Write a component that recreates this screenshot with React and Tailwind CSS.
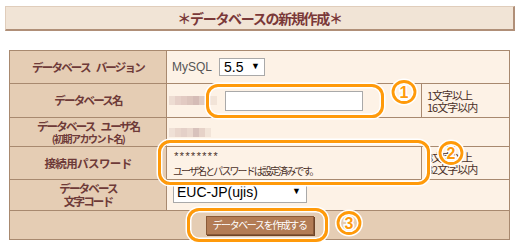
import React from "react";

const labelBase =
  "bg-[#e5cdb4] border border-[#a8896f] text-center font-bold text-[11.5px] text-[#6e3a38] leading-[13px]";
const label = labelBase + " tracking-[-1.8px]";
const value = "bg-[#fdf2e6] border border-[#a8896f] text-[11px] text-[#4a3028]";

function Blur({ cells }) {
  return (
    <div className="flex h-[9px]">
      {cells.map((c, i) => (
        <div key={i} className="h-full w-[6px]" style={{ background: c }} />
      ))}
    </div>
  );
}

function Gap() {
  return <span className="inline-block w-[6px]" />;
}

function Circled({ n, x, y }) {
  return (
    <svg
      className="absolute"
      style={{ left: x - 15, top: y - 15 }}
      width="30"
      height="30"
      viewBox="0 0 30 30"
    >
      <ellipse cx="15" cy="15" rx="11" ry="10.5" fill="none" stroke="#fff" strokeWidth="6" />
      <ellipse cx="15" cy="15" rx="11" ry="10.5" fill="none" stroke="#ff9a0a" strokeWidth="2.8" />
      <text
        x="15"
        y="20.5"
        textAnchor="middle"
        fontSize="16"
        fontWeight="bold"
        fontFamily="'Liberation Sans', sans-serif"
        fill="#ff9a0a"
        stroke="#fff"
        strokeWidth="3"
        paintOrder="stroke"
      >
        {n}
      </text>
    </svg>
  );
}

export default function App() {
  return (
    <div className="relative w-[520px] h-[250px] overflow-hidden bg-white font-['Noto_Sans_CJK_JP',sans-serif]">
      {/* Title */}
      <div className="mx-[5px] mt-[6px] h-[25px] bg-[#f1e4d6] border-l border-t border-[#e0cdbb] border-b-2 border-r-2 border-b-[#b08f78] border-r-[#b08f78] flex items-center justify-center text-[14px] tracking-[-1.3px] font-bold text-[#7a3838]">
        ＊データベースの新規作成＊
      </div>

      <table className="ml-[9px] mt-[19px] w-[500px] border-collapse border border-[#a8896f] table-fixed">
        <colgroup>
          <col className="w-[157px]" />
          <col className="w-[255px]" />
          <col className="w-[88px]" />
        </colgroup>
        <tbody>
          <tr className="h-[33px]">
            <td className={label}>
              データベース<Gap />バージョン
            </td>
            <td className={value} colSpan={2}>
              <div className="flex items-center pl-[5px]">
                <span className="text-[12px] text-[#555] font-['Liberation_Sans',sans-serif] mr-[7px]">MySQL</span>
                <div className="flex items-center justify-between w-[46px] h-[18px] bg-white border border-[#a9a9a9] px-[4px] text-[14px] text-black font-['Liberation_Sans',sans-serif]">
                  <span>5.5</span>
                  <span className="text-[9px]">▼</span>
                </div>
              </div>
            </td>
          </tr>
          <tr className="h-[34px]">
            <td className={label}>データベース名</td>
            <td className={value}>
              <div className="flex items-center pl-[2px]">
                <Blur cells={["#eddcd2", "#e6d0c8", "#e2cac2", "#dcc4bc", "#d5bcb6", "#e0ccc4", "#ead8ce", "#f2e4d8"]} />
                <div className="ml-[8px] w-[138px] h-[20px] bg-white border border-[#a9a9a9]" />
              </div>
            </td>
            <td className={value + " pl-[5px] leading-[12px] tracking-[-1px]"}>
              1文字以上
              <br />
              16文字以内
            </td>
          </tr>
          <tr className="h-[29px]">
            <td className={label}>
              データベース<Gap />ユーザ名
              <div className="text-[10px] leading-[11px] tracking-[-1.5px]">(初期アカウント名)</div>
            </td>
            <td className={value} colSpan={2}>
              <div className="pl-[2px]">
                <Blur cells={["#efe0d6", "#e9d6cc", "#e4d0c8", "#ead8ce", "#d8c2bc", "#e6d2c8", "#f2e4d8"]} />
              </div>
            </td>
          </tr>
          <tr className="h-[33px]">
            <td className={labelBase + " tracking-[-0.6px]"}>接続用パスワード</td>
            <td className={value + " pl-[6px] leading-[13px]"}>
              <div className="text-[11px] tracking-[-1px] font-['Liberation_Mono',monospace] leading-[13px] pt-[2px]">********</div>
              <div className="text-[10px] tracking-[-1.9px]">ユーザ名とパスワードは設定済みです。</div>
            </td>
            <td className={value + " pl-[5px] leading-[12px] tracking-[-1px]"}>
              8文字以上
              <br />
              32文字以内
            </td>
          </tr>
          <tr className="h-[31px]">
            <td className={label}>
              データベース
              <br />
              文字コード
            </td>
            <td className={value + " align-top pt-[1px]"} colSpan={2}>
              <div className="ml-[6px] flex items-center justify-between w-[134px] h-[22px] bg-white border border-[#a9a9a9] px-[3px] text-[14px] text-black font-['Liberation_Sans',sans-serif]">
                <span>EUC-JP(ujis)</span>
                <span className="text-[9px] mr-[2px]">▼</span>
              </div>
            </td>
          </tr>
          <tr className="h-[29px]">
            <td colSpan={3} className="bg-[#e5cdb4] border border-[#a8896f]">
              <div className="flex justify-center">
                <button className="h-[19px] w-[108px] bg-[#b37c55] border border-[#8a5a38] shadow-[1px_1px_0_#6e4428] text-white text-[10px] tracking-[-1.4px] leading-none">
                  データベースを作成する
                </button>
              </div>
            </td>
          </tr>
        </tbody>
      </table>

      {/* Annotations */}
      <div className="absolute left-[206px] top-[84px] w-[178px] h-[34px] rounded-[12px] border-[3px] border-[#ff9a0a] shadow-[0_0_0_1.5px_#fff,inset_0_0_0_1.5px_#fff]" />
      <div className="absolute left-[158px] top-[140px] w-[272px] h-[45px] rounded-[12px] border-[3px] border-[#ff9a0a] shadow-[0_0_0_1.5px_#fff,inset_0_0_0_1.5px_#fff]" />
      <div className="absolute left-[187px] top-[208px] w-[141px] h-[34px] rounded-[12px] border-[3px] border-[#ff9a0a] shadow-[0_0_0_1.5px_#fff,inset_0_0_0_1.5px_#fff]" />
      <Circled n="1" x={404} y={92} />
      <Circled n="2" x={451} y={153} />
      <Circled n="3" x={349} y={223} />
    </div>
  );
}
